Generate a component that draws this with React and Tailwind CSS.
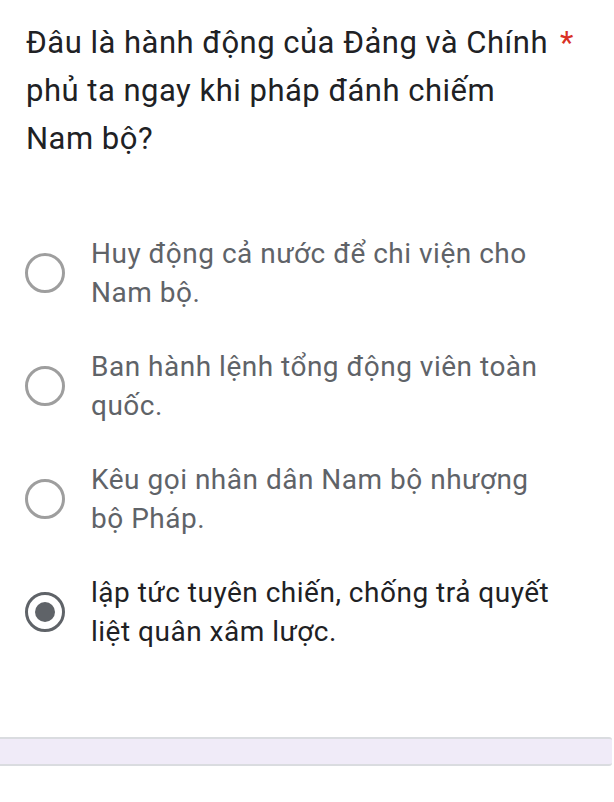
import React, { useState } from "react";

const options = [
  ["Huy động cả nước để chi viện cho", "Nam bộ."],
  ["Ban hành lệnh tổng động viên toàn", "quốc."],
  ["Kêu gọi nhân dân Nam bộ nhượng", "bộ Pháp."],
  ["lập tức tuyên chiến, chống trả quyết", "liệt quân xâm lược."],
];

function Radio({ checked }) {
  return (
    <div
      className={
        "flex h-[40px] w-[40px] shrink-0 items-center justify-center rounded-full border-[3px] " +
        (checked ? "border-[#5f6368]" : "border-[#9e9e9e]")
      }
    >
      {checked && <div className="h-[20px] w-[20px] rounded-full bg-[#5f6368]" />}
    </div>
  );
}

export default function App() {
  const [selected, setSelected] = useState(3);

  return (
    <div className="min-h-[802px] w-[614px] bg-white font-['Roboto',sans-serif]">
      <div className="flex pl-[26px] pt-[19px]">
        <h1 className="w-[534px] text-[31px] font-normal leading-[48px] tracking-[0.5px] text-[#202124]">
          <span className="block whitespace-nowrap">Đâu là hành động của Đảng và Chính</span>
          <span className="block whitespace-nowrap">phủ ta ngay khi pháp đánh chiếm</span>
          <span className="block whitespace-nowrap">Nam bộ?</span>
        </h1>
        <span className="text-[31px] leading-[48px] text-[#d93025]">*</span>
      </div>

      <div className="mt-[71px] flex flex-col gap-[35px]">
        {options.map((lines, i) => (
          <label
            key={i}
            onClick={() => setSelected(i)}
            className="flex cursor-pointer items-center pl-[25px]"
          >
            <Radio checked={selected === i} />
            <div
              className={
                "ml-[26px] text-[28px] leading-[39px] tracking-[0.5px] " +
                (selected === i ? "text-[#202124]" : "text-[#5f6368]")
              }
            >
              {lines.map((l, j) => (
                <span key={j} className="block whitespace-nowrap">
                  {l}
                </span>
              ))}
            </div>
          </label>
        ))}
      </div>

      <div className="mt-[86px] h-[29px] w-[612px] rounded-r-[3px] border-y-2 border-[#dadce0] bg-[#f0ebf8]" />
    </div>
  );
}
